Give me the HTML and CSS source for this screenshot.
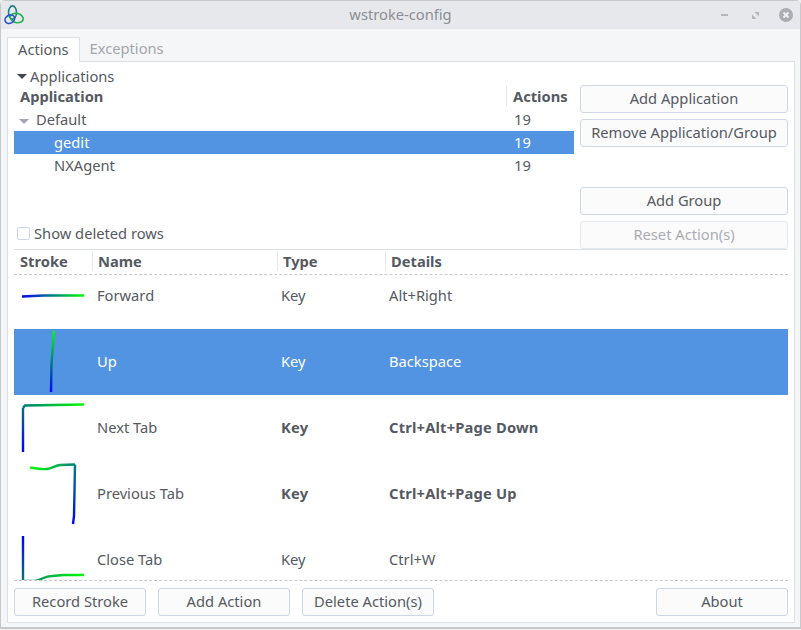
FILE: index.html
```html
<!DOCTYPE html>
<html lang="en">
<head>
    <meta charset="UTF-8">
    <meta name="viewport" content="width=device-width, initial-scale=1.0">
    <title>wstroke-config</title>
    <link rel="stylesheet" href="styles.css">
</head>
<body>
    <div class="window">
        <svg width="0" height="0" class="defs">
            <defs>
                <linearGradient id="fwd" gradientUnits="userSpaceOnUse" x1="8" y1="0" x2="70" y2="0">
                    <stop offset="0" stop-color="#0000ff"/><stop offset="1" stop-color="#00ff00"/>
                </linearGradient>
                <linearGradient id="up" gradientUnits="userSpaceOnUse" x1="0" y1="63" x2="0" y2="2">
                    <stop offset="0" stop-color="#0000ff"/><stop offset="1" stop-color="#00ff00"/>
                </linearGradient>
                <linearGradient id="nextA" gradientUnits="userSpaceOnUse" x1="0" y1="57" x2="0" y2="10">
                    <stop offset="0" stop-color="#0000ff"/><stop offset="1" stop-color="#007878"/>
                </linearGradient>
                <linearGradient id="nextB" gradientUnits="userSpaceOnUse" x1="9" y1="0" x2="70" y2="0">
                    <stop offset="0" stop-color="#007878"/><stop offset="1" stop-color="#00ff00"/>
                </linearGradient>
                <linearGradient id="prevA" gradientUnits="userSpaceOnUse" x1="61" y1="0" x2="16" y2="0">
                    <stop offset="0" stop-color="#008080"/><stop offset="1" stop-color="#00ff00"/>
                </linearGradient>
                <linearGradient id="prevB" gradientUnits="userSpaceOnUse" x1="0" y1="63" x2="0" y2="3">
                    <stop offset="0" stop-color="#0000ff"/><stop offset="1" stop-color="#008080"/>
                </linearGradient>
                <linearGradient id="closeA" gradientUnits="userSpaceOnUse" x1="0" y1="9" x2="0" y2="54">
                    <stop offset="0" stop-color="#0000ff"/><stop offset="1" stop-color="#007878"/>
                </linearGradient>
                <linearGradient id="closeB" gradientUnits="userSpaceOnUse" x1="9" y1="0" x2="70" y2="0">
                    <stop offset="0" stop-color="#007878"/><stop offset="1" stop-color="#00ff00"/>
                </linearGradient>
            </defs>
        </svg>

        <header class="titlebar">
            <svg class="app-logo" width="21" height="20" viewBox="0 0 21 20" fill="none" stroke-width="1.6">
                <ellipse cx="8.5" cy="7.5" rx="4" ry="6.6" stroke="#1f7f8c"/>
                <ellipse cx="12.7" cy="13" rx="6.6" ry="4.6" stroke="#22b34c" transform="rotate(15 12.7 13)"/>
                <ellipse cx="5.8" cy="14.2" rx="5" ry="4" stroke="#2a4fd0" transform="rotate(-30 5.8 14.2)"/>
            </svg>
            <span class="title">wstroke-config</span>
            <div class="controls">
                <span class="ctl-min"></span>
                <svg class="ctl-max" width="7" height="7" viewBox="0 0 7 7" fill="#b4b6bb">
                    <polygon points="2.5,0 7,0 7,4.5"/>
                    <polygon points="0,2.5 4.5,7 0,7"/>
                </svg>
                <svg class="ctl-close" width="14" height="14" viewBox="0 0 14 14">
                    <circle cx="7" cy="7" r="7" fill="#a9acb2"/>
                    <path d="M4.5 4.5l5 5M9.5 4.5l-5 5" stroke="#f0f1f2" stroke-width="2"/>
                </svg>
            </div>
        </header>

        <div class="tabs">
            <div class="tab active">Actions</div>
            <div class="tab">Exceptions</div>
        </div>

        <main class="panel">
            <section class="top">
                <div class="apps">
                    <div class="expander"><span class="arrow dark"></span>Applications</div>
                    <div class="tree-head">
                        <span>Application</span>
                        <span class="tree-head-count">Actions</span>
                    </div>
                    <div class="tree-row">
                        <span class="tree-name parent"><span class="arrow light"></span>Default</span>
                        <span class="tree-count">19</span>
                    </div>
                    <div class="tree-row selected">
                        <span class="tree-name child">gedit</span>
                        <span class="tree-count">19</span>
                    </div>
                    <div class="tree-row">
                        <span class="tree-name child">NXAgent</span>
                        <span class="tree-count">19</span>
                    </div>
                    <label class="check"><span class="box"></span>Show deleted rows</label>
                </div>
                <div class="side-buttons">
                    <button>Add Application</button>
                    <button>Remove Application/Group</button>
                    <button class="spaced">Add Group</button>
                    <button class="disabled">Reset Action(s)</button>
                </div>
            </section>

            <section class="actions">
                <div class="list-head">
                    <span>Stroke</span>
                    <span>Name</span>
                    <span>Type</span>
                    <span>Details</span>
                </div>
                <div class="list-body">
                    <div class="row first">
                        <svg class="stroke" width="83" height="66" fill="none" stroke-width="2.4">
                            <path d="M8 33.5L30 32.5L70 32.5" stroke="url(#fwd)"/>
                        </svg>
                        <span>Forward</span><span>Key</span><span>Alt+Right</span>
                    </div>
                    <div class="row selected">
                        <svg class="stroke" width="83" height="66" fill="none" stroke-width="2.4">
                            <path d="M37 63L37.5 35L40 2" stroke="url(#up)"/>
                        </svg>
                        <span>Up</span><span>Key</span><span>Backspace</span>
                    </div>
                    <div class="row">
                        <svg class="stroke" width="83" height="66" fill="none" stroke-width="2.4">
                            <path d="M9 57L9 13" stroke="url(#nextA)"/>
                            <path d="M9 13L11 10.5L40 10L70 9.5" stroke="url(#nextB)"/>
                        </svg>
                        <span>Next Tab</span><span class="strong">Key</span><span class="strong">Ctrl+Alt+Page Down</span>
                    </div>
                    <div class="row">
                        <svg class="stroke" width="83" height="66" fill="none" stroke-width="2.4">
                            <path d="M16 6.5C22 7.5 27 8.5 33 8C38 7.5 40 5 46 4L61 3.5" stroke="url(#prevA)"/>
                            <path d="M61 3.5L60.5 30L60 55L59 63" stroke="url(#prevB)"/>
                        </svg>
                        <span>Previous Tab</span><span class="strong">Key</span><span class="strong">Ctrl+Alt+Page Up</span>
                    </div>
                    <div class="row">
                        <svg class="stroke" width="83" height="66" fill="none" stroke-width="2.4">
                            <path d="M9 9L9 54" stroke="url(#closeA)"/>
                            <path d="M9 54L21 54C28 53 30 49 38 49L50 48L70 48" stroke="url(#closeB)"/>
                        </svg>
                        <span>Close Tab</span><span>Key</span><span>Ctrl+W</span>
                    </div>
                </div>
            </section>

            <footer class="bottom-bar">
                <button class="wide">Record Stroke</button>
                <button class="wide">Add Action</button>
                <button class="wide">Delete Action(s)</button>
                <button class="wide push">About</button>
            </footer>
        </main>
    </div>
</body>
</html>
```

FILE: styles.css
```css
html, body {
    margin: 0;
    padding: 0;
    height: 100%;
    overflow: hidden;
    background: #f0f0f0;
}
body {
    font-family: "Noto Sans", "Open Sans", sans-serif;
    font-size: 14.7px;
    color: #555962;
}
.defs {
    position: absolute;
}
.window {
    height: 629px;
    box-sizing: border-box;
    background: #f5f6f7;
    border: 1px solid #c8c9cc;
    border-bottom-width: 2px;
    border-radius: 5px 5px 0 0;
    display: flex;
    flex-direction: column;
}
.titlebar {
    height: 28px;
    flex: none;
    background: #e7e8eb;
    display: flex;
    align-items: center;
    justify-content: center;
    position: relative;
}
.title {
    color: #8b8e95;
    padding-bottom: 2px;
}
.app-logo {
    position: absolute;
    left: 3px;
    top: 4px;
}
.controls {
    position: absolute;
    right: 7px;
    top: 7px;
    display: flex;
    align-items: center;
}
.ctl-min {
    width: 7px;
    height: 2px;
    background: #b4b6bb;
    margin-right: 24px;
}
.ctl-max {
    margin-right: 20px;
}
.tabs {
    display: flex;
    padding: 8px 0 0 6px;
    height: 24px;
    flex: none;
    position: relative;
    z-index: 1;
}
.tab {
    padding: 0 10px;
    height: 24px;
    line-height: 22px;
    color: #a4a7ad;
}
.tab.active {
    background: #fff;
    color: #555962;
    border: 1px solid #dcdfe3;
    border-bottom: none;
}
.panel {
    background: #fff;
    border: 1px solid #dcdfe3;
    margin: 0 5px 4px 6px;
    padding: 0 6px 6px 6px;
    flex: 1;
    min-height: 0;
    display: flex;
    flex-direction: column;
}
.top {
    display: flex;
    justify-content: space-between;
    flex: none;
    height: 188px;
    border-bottom: 1px solid #dcdfe3;
    box-sizing: border-box;
}
.apps {
    width: 560px;
    display: flex;
    flex-direction: column;
}
.expander {
    height: 24px;
    box-sizing: border-box;
    padding: 4px 0 0 3px;
    display: flex;
    align-items: center;
}
.arrow {
    display: inline-block;
    width: 0;
    height: 0;
    border-left: 5px solid transparent;
    border-right: 5px solid transparent;
    border-top: 5px solid #45484f;
    margin-right: 3px;
}
.arrow.light {
    border-top-color: #a4a7ad;
    margin-right: 7px;
    vertical-align: 1px;
}
.tree-head {
    height: 22px;
    box-sizing: border-box;
    padding: 0 6px 2px;
    display: flex;
    justify-content: space-between;
    align-items: center;
    font-weight: bold;
}
.tree-head-count {
    border-left: 1px solid #e6e7e9;
    padding-left: 6px;
    width: 61px;
    margin-right: -6px;
    white-space: nowrap;
}
.tree-row {
    height: 23px;
    box-sizing: border-box;
    padding-bottom: 1px;
    display: flex;
    align-items: center;
}
.tree-row.selected,
.row.selected {
    background: #5294e2;
    color: #fff;
}
.tree-name {
    flex: 1;
}
.tree-name.parent {
    padding-left: 5px;
}
.tree-name.child {
    padding-left: 40px;
}
.tree-count {
    width: 60px;
    flex: none;
}
.check {
    display: flex;
    align-items: center;
    margin-top: 46px;
    padding-left: 3px;
}
.box {
    width: 11px;
    height: 11px;
    border: 1px solid #cfd6e6;
    border-radius: 2px;
    background: #fff;
    margin-right: 4px;
}
.side-buttons {
    width: 208px;
    display: flex;
    flex-direction: column;
    gap: 6px;
    padding-top: 23px;
}
button {
    height: 28px;
    padding: 0 0 2px;
    box-sizing: border-box;
    font: inherit;
    color: #555962;
    background: #fbfbfc;
    border: 1px solid #cfd6e6;
    border-radius: 3px;
    white-space: nowrap;
}
button.spaced {
    margin-top: 34px;
}
button.disabled {
    color: #a9acb2;
    border-color: #e4e8f1;
}
.actions {
    flex: none;
    height: 331px;
    display: flex;
    flex-direction: column;
    border-bottom: 1px dashed #c8c9cc;
    box-sizing: border-box;
}
.list-head {
    height: 25px;
    flex: none;
    box-sizing: border-box;
    padding-bottom: 2px;
    display: grid;
    grid-template-columns: 78px 185px 108px 1fr;
    align-items: center;
    font-weight: bold;
    border-bottom: 1px dashed #c8c9cc;
}
.list-head span {
    border-left: 1px solid #e6e7e9;
    padding-left: 5px;
}
.list-head span:first-child {
    border-left: none;
    padding-left: 6px;
}
.list-body {
    flex: 1;
    overflow: hidden;
    min-height: 0;
}
.row {
    height: 66px;
    display: grid;
    grid-template-columns: 83px 184px 108px 1fr;
    align-items: center;
}
.row span {
    padding-bottom: 2px;
}
.row.first {
    margin-top: -12px;
}
.stroke {
    display: block;
}
.strong {
    font-weight: bold;
    letter-spacing: 0.2px;
}
.bottom-bar {
    display: flex;
    gap: 12px;
    margin-top: 7px;
    flex: none;
}
.wide {
    width: 132px;
}
.push {
    margin-left: auto;
}
```
